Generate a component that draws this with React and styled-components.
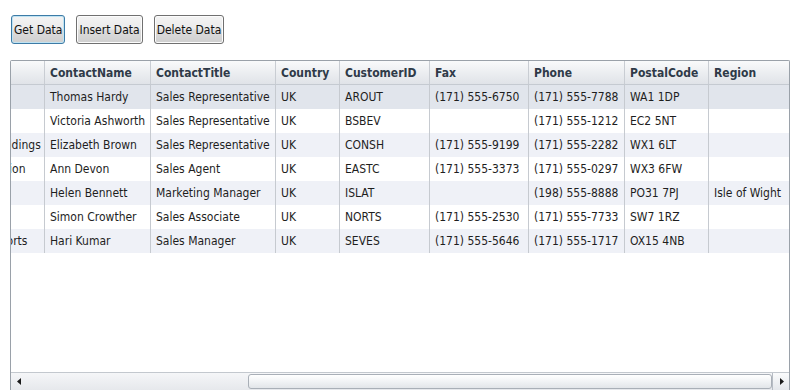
import React from "react";
import styled, { createGlobalStyle } from "styled-components";

const Global = createGlobalStyle`
  html, body { margin: 0; padding: 0; background: #ffffff; }
  body {
    font-family: "DejaVu Sans Condensed", "DejaVu Sans", sans-serif;
    font-stretch: condensed;
    font-size: 12px;
    color: #1e1e1e;
  }
`;

const Page = styled.div`
  width: 791px;
  height: 390px;
  box-sizing: border-box;
  padding: 15px 1px 0 10px;
  display: flex;
  flex-direction: column;
  gap: 16px;
  overflow: hidden;
`;

const Toolbar = styled.div`
  display: flex;
  gap: 11px;
  padding-left: 1px;
`;

const Button = styled.button`
  height: 29px;
  padding: 0 2px;
  font-family: inherit;
  font-stretch: condensed;
  font-size: 12px;
  color: #111;
  border-radius: 3px;
  border: 1px solid ${(p) => (p.$focused ? "#3d7ba6" : "#707070")};
  box-shadow: inset 0 0 0 1px ${(p) => (p.$focused ? "#bfe3f3" : "#fcfcfc")};
  background: linear-gradient(#f3f3f3 0%, #ebebeb 48%, #dddddd 52%, #cfcfcf 100%);
  cursor: pointer;
`;

const Grid = styled.div`
  flex: 1;
  border: 1px solid #9aa1a9;
  border-bottom: none;
  border-radius: 2px 2px 0 0;
  display: flex;
  flex-direction: column;
  overflow: hidden;
  background: #fff;
`;

const Viewport = styled.div`
  flex: 1;
  overflow: hidden;
`;

const Sheet = styled.div`
  margin-left: -96px;
  display: flex;
  flex-direction: column;
`;

const Row = styled.div`
  display: flex;
  height: ${(p) => (p.$header ? 23 : 24)}px;
  background: ${(p) =>
    p.$header
      ? "linear-gradient(#f9fafb 0%, #eceef1 50%, #e0e3e8 100%)"
      : p.$selected
      ? "#e1e5ec"
      : p.$alt
      ? "#eff1f7"
      : "#ffffff"};
  border-bottom: ${(p) => (p.$header ? "1px solid #c5cad1" : "none")};
`;

const Cell = styled.div`
  flex: 0 0 ${(p) => p.$w}px;
  box-sizing: border-box;
  padding: 0 4px 0 5px;
  display: flex;
  align-items: center;
  white-space: nowrap;
  overflow: hidden;
  border-right: 1px solid ${(p) => (p.$header ? "#c9cdd3" : "#c6cad0")};
  font-weight: ${(p) => (p.$header ? "bold" : "normal")};
  color: ${(p) => (p.$header ? "#2f3a48" : "#1e1e1e")};
`;

const ScrollBar = styled.div`
  height: 17px;
  display: flex;
  align-items: stretch;
  border-top: 1px solid #c3c8ce;
  background: linear-gradient(#f5f6f8, #e6e8ec);
`;

const Arrow = styled.div`
  width: 17px;
  display: flex;
  align-items: center;
  justify-content: center;
  box-sizing: border-box;
  ${(p) => p.$boxed && "border-left: 1px solid #b6bcc4; background: linear-gradient(#fafbfc, #e4e7eb);"}
`;

const Track = styled.div`
  flex: 1;
  display: flex;
  padding: 1px 0;
`;

const Thumb = styled.div`
  margin-left: auto;
  width: 522px;
  border: 1px solid #a9afb7;
  border-radius: 3px;
  background: linear-gradient(#ffffff 0%, #f1f3f5 50%, #e2e5e9 100%);
`;

const columns = [
  { key: "CompanyName", w: 130 },
  { key: "ContactName", w: 106 },
  { key: "ContactTitle", w: 125 },
  { key: "Country", w: 64 },
  { key: "CustomerID", w: 90 },
  { key: "Fax", w: 99 },
  { key: "Phone", w: 96 },
  { key: "PostalCode", w: 84 },
  { key: "Region", w: 100 },
];

const data = [
  ["Around the Horn", "Thomas Hardy", "Sales Representative", "UK", "AROUT", "(171) 555-6750", "(171) 555-7788", "WA1 1DP", ""],
  ["B's Beverages", "Victoria Ashworth", "Sales Representative", "UK", "BSBEV", "", "(171) 555-1212", "EC2 5NT", ""],
  ["Consolidated Holdings", "Elizabeth Brown", "Sales Representative", "UK", "CONSH", "(171) 555-9199", "(171) 555-2282", "WX1 6LT", ""],
  ["Eastern Connection", "Ann Devon", "Sales Agent", "UK", "EASTC", "(171) 555-3373", "(171) 555-0297", "WX3 6FW", ""],
  ["Island Trading", "Helen Bennett", "Marketing Manager", "UK", "ISLAT", "", "(198) 555-8888", "PO31 7PJ", "Isle of Wight"],
  ["North/South", "Simon Crowther", "Sales Associate", "UK", "NORTS", "(171) 555-2530", "(171) 555-7733", "SW7 1RZ", ""],
  ["Seven Seas Imports", "Hari Kumar", "Sales Manager", "UK", "SEVES", "(171) 555-5646", "(171) 555-1717", "OX15 4NB", ""],
];

const LeftTri = () => (
  <svg width="5" height="7" viewBox="0 0 5 7">
    <path d="M4 0 L0 3.5 L4 7 Z" fill="#1a1a1a" />
  </svg>
);
const RightTri = () => (
  <svg width="5" height="7" viewBox="0 0 5 7">
    <path d="M1 0 L5 3.5 L1 7 Z" fill="#1a1a1a" />
  </svg>
);

export default function App() {
  return (
    <>
      <Global />
      <Page>
        <Toolbar>
          <Button $focused>Get Data</Button>
          <Button>Insert Data</Button>
          <Button>Delete Data</Button>
        </Toolbar>
        <Grid>
          <Viewport>
            <Sheet>
              <Row $header>
                {columns.map((c) => (
                  <Cell key={c.key} $w={c.w} $header>
                    {c.key === "CompanyName" ? "" : c.key}
                  </Cell>
                ))}
              </Row>
              {data.map((r, i) => (
                <Row key={i} $selected={i === 0} $alt={i % 2 === 0}>
                  {r.map((v, j) => (
                    <Cell key={j} $w={columns[j].w}>
                      {v}
                    </Cell>
                  ))}
                </Row>
              ))}
            </Sheet>
          </Viewport>
          <ScrollBar>
            <Arrow>
              <LeftTri />
            </Arrow>
            <Track>
              <Thumb />
            </Track>
            <Arrow $boxed>
              <RightTri />
            </Arrow>
          </ScrollBar>
        </Grid>
      </Page>
    </>
  );
}
